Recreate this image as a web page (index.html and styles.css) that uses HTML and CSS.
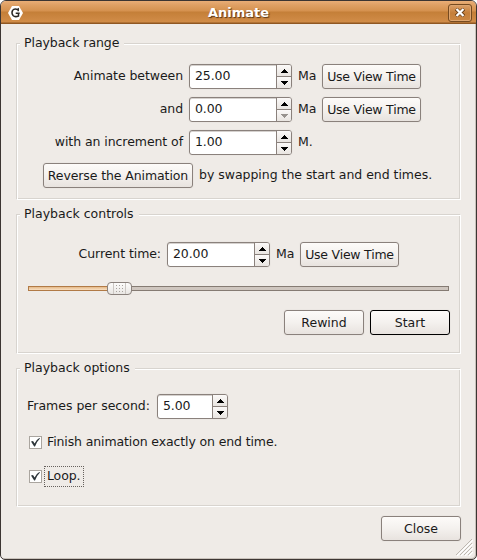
FILE: index.html
```
<!DOCTYPE html>
<html lang="en">
<head>
<meta charset="utf-8">
<title>Animate</title>
<link rel="stylesheet" href="styles.css">
</head>
<body>
<svg class="defs" width="0" height="0">
  <symbol id="up" viewBox="0 0 7 4"><path d="M3 0h1v1h1v1h1v1h1v1H0V3h1V2h1V1h1z"/></symbol>
  <symbol id="down" viewBox="0 0 7 4"><path d="M0 0h7v1H6v1H5v1H4v1H3V3H2V2H1V1H0z"/></symbol>
  <symbol id="tick" viewBox="0 0 9 9"><path d="M0 3.5L2 3L3.6 5.4Q5.2 1.8 8.3 0L9 .5Q6 3.2 4 8.5H3.2z"/></symbol>
</svg>
<main class="window">
  <header class="titlebar">
    <svg class="logo" width="15" height="14" viewBox="0 0 15 14"><path d="M4 0h7l4 7-4 7H4L0 7z" fill="#fff"/><path d="M10.2 5.2V3.1L9.5 3.5Q6.2 2.2 4.6 4.4Q3.2 7 5 9.4Q7 11.5 10.5 10V7.3M7.7 7.2h4" fill="none" stroke="#292725" stroke-width="1.5"/></svg>
    <h1>Animate</h1>
    <button class="x" aria-label="Close window"><svg width="10" height="9" viewBox="0 0 10 9"><path d="M1 .9l8 7.2M9 .9L1 8.1" stroke="#693f18" stroke-width="3.8"/><path d="M1.5 1l7 7M8.5 1l-7 7" stroke="#fff" stroke-width="2.3"/></svg></button>
  </header>
  <section class="group range">
    <h2>Playback range</h2>
    <div class="row"><span class="label">Animate between</span><div class="spin"><span>25.00</span><div class="arrows"><i><svg><use href="#up"/></svg></i><i><svg><use href="#down"/></svg></i></div></div><span class="unit">Ma</span><button class="btn view">Use View Time</button></div>
    <div class="row"><span class="label">and</span><div class="spin"><span>0.00</span><div class="arrows"><i><svg><use href="#up"/></svg></i><i class="off"><svg><use href="#down"/></svg></i></div></div><span class="unit">Ma</span><button class="btn view">Use View Time</button></div>
    <div class="row"><span class="label">with an increment of</span><div class="spin"><span>1.00</span><div class="arrows"><i><svg><use href="#up"/></svg></i><i><svg><use href="#down"/></svg></i></div></div><span class="unit">M.</span></div>
    <div class="row reverse"><button class="btn">Reverse the Animation</button><span>by swapping the start and end times.</span></div>
  </section>
  <section class="group controls">
    <h2>Playback controls</h2>
    <div class="row"><span class="label">Current time:</span><div class="spin"><span>20.00</span><div class="arrows"><i><svg><use href="#up"/></svg></i><i><svg><use href="#down"/></svg></i></div></div><span class="unit">Ma</span><button class="btn view">Use View Time</button></div>
    <div class="slider"><div class="filled"></div><div class="handle"><div class="dots"></div></div><div class="rest"></div></div>
    <div class="row actions"><button class="btn">Rewind</button><button class="btn default">Start</button></div>
  </section>
  <section class="group options">
    <h2>Playback options</h2>
    <div class="row"><span class="label">Frames per second:</span><div class="spin small"><span>5.00</span><div class="arrows"><i><svg><use href="#up"/></svg></i><i><svg><use href="#down"/></svg></i></div></div></div>
    <div class="check first"><span class="box"><svg><use href="#tick"/></svg></span><span class="text">Finish animation exactly on end time.</span></div>
    <div class="check"><span class="box"><svg><use href="#tick"/></svg></span><span class="text focus">Loop.</span></div>
  </section>
  <footer><button class="btn">Close</button></footer>
  <svg class="grip" width="17" height="17" viewBox="0 0 17 17"><path d="M1 17L17 1M5 17L17 5M9 17L17 9M13 17l4-4" stroke="#fff" stroke-width="1.2"/><path d="M0 16L16 0M4 16L16 4M8 16l8-8M12 16l4-4" stroke="#bdb8b1"/></svg>
</main>
</body>
</html>
```

FILE: styles.css
```
* { box-sizing: border-box; }
body {
  margin: 0;
  background: #fff;
  color: #1a1a1a;
  font: 12.5px/15px "DejaVu Sans", sans-serif;
}
h1, h2 { margin: 0; font-weight: normal; }
svg { display: block; }
.defs { position: absolute; }
.window {
  position: relative;
  width: 477px;
  height: 560px;
  padding: 0 15px;
  overflow: hidden;
  background: #efebe7;
  border: 1px solid #3c3532;
  border-radius: 6px 6px 5px 5px;
  box-shadow: inset -1px -1px #c9c2bb;
}
.titlebar {
  display: flex;
  align-items: center;
  justify-content: space-between;
  height: 23px;
  margin: 0 -15px 19px;
  padding: 0 4px 0 7px;
  background: linear-gradient(#e9ae76 0, #dfa064 4px, #d5914f 10px, #c47f38 11px, #d18c48 21px, #8f5722 22px);
}
.titlebar h1 {
  padding-left: 6px;
  color: #fff;
  font-size: 13px;
  font-weight: bold;
  line-height: 22px;
  text-shadow: 1px 1px 1px #573517;
}
.x {
  display: grid;
  place-items: center;
  width: 24px;
  height: 18px;
  padding: 0;
  background: linear-gradient(#dca069, #c57f3a 50%, #cb8743);
  border: 1px solid #764a20;
  border-radius: 3px;
  box-shadow: inset 0 0 0 1px #dda56f;
}
.group {
  position: relative;
  border: 1px solid #d8d4cf;
  border-right-color: #fff;
  border-bottom-color: #fff;
  box-shadow: inset 1px 1px #fff, inset -1px -1px #d8d4cf;
  width: 445px;
}
.group h2 {
  position: absolute;
  top: -9px;
  left: 3px;
  padding: 0 5px 0 4px;
  background: #efebe7;
  font-size: inherit;
}
.range { height: 157px; padding-top: 20px; margin-bottom: 14px; }
.range h2 { letter-spacing: -.05px; }
.controls { height: 140px; padding-top: 27px; margin-bottom: 14px; }
.options { height: 139px; padding-top: 25px; }
.row { display: flex; height: 25px; margin-bottom: 8px; white-space: nowrap; }
.row > span { line-height: 24px; }
.label { text-align: right; letter-spacing: -.07px; }
.range .label { width: 166px; margin-right: 6px; }
.controls .label { width: 144px; margin-right: 6px; }
.options .label { width: 130px; padding-left: 10px; text-align: left; letter-spacing: 0; }
.unit { width: 30px; padding-left: 6px; }
.spin {
  display: flex;
  width: 103px;
  height: 25px;
  border: 1px solid #8a817c;
  border-radius: 3px;
  background: #fff;
  box-shadow: inset 0 1px #d5d1ce, 0 0 0 1px #ebe7e3;
  overflow: hidden;
}
.spin.small { width: 71px; margin-left: 10px; }
.spin > span { flex: 1; padding-left: 5px; line-height: 22px; letter-spacing: -.1px; }
.arrows { width: 15px; border-left: 1px solid #8a817c; }
.arrows i {
  display: grid;
  place-items: center;
  height: 11px;
  background: linear-gradient(#fbf9f8, #e9e5e1);
}
.arrows i + i { height: 12px; border-top: 1px solid #8a817c; }
.arrows svg { width: 7px; height: 4px; fill: #000; }
.arrows .off svg { fill: #98938f; }
.btn {
  height: 25px;
  padding: 1px 0 0;
  border: 1px solid #8a817c;
  border-radius: 3px;
  background: linear-gradient(#fdfbf9, #f4f1ee 50%, #e8e3df);
  box-shadow: 0 0 0 1px #ebe7e3;
  color: inherit;
  font: inherit;
  line-height: 22px;
  white-space: nowrap;
}
.view { width: 99px; letter-spacing: -.22px; }
.reverse { padding-left: 26px; gap: 6px; }
.reverse .btn { width: 150px; letter-spacing: -.1px; }
.reverse span { letter-spacing: -.03px; }
.slider { display: flex; align-items: center; height: 13px; margin: 15px 11px; }
.filled { width: 79px; height: 5px; border: 1px solid #b17a46; border-right: 0; background: linear-gradient(#e5ba89, #f8dfc3); }
.rest { flex: 1; height: 5px; border: 1px solid #857b73; border-left: 0; background: #cfc6bf; }
.handle {
  display: grid;
  place-items: center;
  width: 25px;
  height: 13px;
  border: 1px solid #8a817c;
  border-radius: 4px;
  background: linear-gradient(#fdfcfb, #e9e6e3);
}
.dots {
  width: 13px;
  height: 11px;
  border: solid #ccc7c3;
  border-width: 0 1px;
  background: radial-gradient(circle at 1.5px 1.5px, #a8a39e .6px, transparent .8px) 1px 1px / 3px 3px;
}
.actions { gap: 6px; justify-content: flex-end; padding-right: 10px; }
.actions .btn, footer .btn { width: 80px; }
.btn.default { border-color: #000; }
.check { display: flex; align-items: center; height: 21px; padding-left: 12px; margin-bottom: 13px; }
.check.first { margin-top: 13px; }
.box { width: 13px; height: 13px; padding: 1px; border: 1px solid #aaa59f; background: #fff; }
.box svg { width: 9px; height: 9px; fill: #2d353a; }
.text { height: 21px; margin-left: 2px; padding: 0 3px; line-height: 19px; letter-spacing: -.12px; }
.text.focus { width: 40px; padding: 0 2px; border: 1px dotted #66615d; line-height: 17px; }
footer { display: flex; justify-content: flex-end; margin-top: 9px; }
.grip { position: absolute; right: 3px; bottom: 3px; }
```
